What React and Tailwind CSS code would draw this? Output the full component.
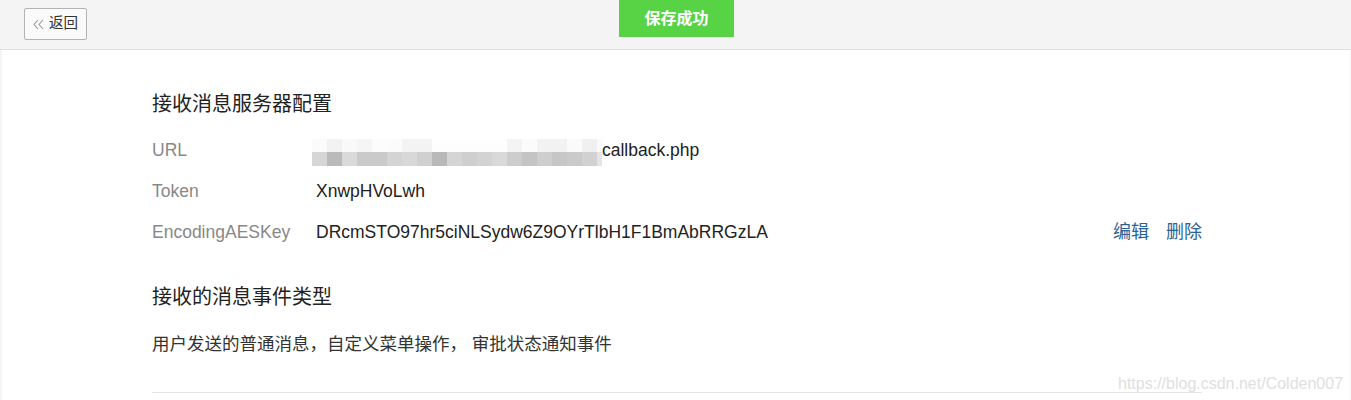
import React from "react";

const font = { fontFamily: '"Liberation Sans", "Noto Sans CJK SC", sans-serif' };

// mosaic that hides the host part of the callback URL
const topRow = [
  "#fbfbfb", "#f2f2f2", "#f9f9f9", "#f5f5f5", "#fcfcfc", "#fbfbfb", "#f3f3f3",
  "#f3f3f3", "#fdfdfd", "#fdfdfd", "#fdfdfd", "#fdfdfd", "#fdfdfd", "#f4f4f4",
  "#fbfbfb", "#f2f2f2", "#f2f2f2", "#fafafa", "#f0f0f0", "#fafafa",
];
const bottomRow = [
  "#d6d6d6", "#bababa", "#dadada", "#cacaca", "#cacaca", "#d4d4d4", "#d8d8d8",
  "#d0d0d0", "#b9b9b9", "#d5d5d5", "#cfcfcf", "#d3d3d3", "#d9d9d9", "#cdcdcd",
  "#c4c4c4", "#cecece", "#c6c6c6", "#cacaca", "#d1d1d1", "#e4e4e4",
];

const Mosaic = () => (
  <div className="flex flex-col w-[290px] overflow-hidden">
    <div className="flex h-[13px]">
      {topRow.map((c, i) => (
        <div key={i} className="shrink-0 w-[15px] h-full" style={{ backgroundColor: c }} />
      ))}
    </div>
    <div className="flex h-[14px]">
      {bottomRow.map((c, i) => (
        <div key={i} className="shrink-0 w-[15px] h-full" style={{ backgroundColor: c }} />
      ))}
    </div>
  </div>
);

const Row = ({ label, children, actions }) => (
  <div className="flex items-center h-[41px] text-[17.5px]">
    <div className="w-[164px] text-[#888]">{label}</div>
    <div className="flex-1 flex items-center text-[#222]">{children}</div>
    {actions && (
      <div className="flex gap-[17px] text-[#2a6496] text-[18px]">
        <span>编辑</span>
        <span>删除</span>
      </div>
    )}
  </div>
);

export default function App() {
  return (
    <div className="relative w-[1351px] h-[400px] overflow-hidden bg-[#f4f4f4]" style={font}>
      {/* Top bar */}
      <div className="h-[50px] border-b border-[#e0e0e0] pl-[24px] pt-[8px]">
        <button className="flex items-center h-[32px] w-[63px] pl-[8px] gap-[5px] border border-[#b3b3b3] rounded-[2px] bg-[#fafafa] text-[#333] text-[14.5px]">
          <svg width="11" height="11" viewBox="0 0 11 11" fill="none" stroke="#9a9a9a" strokeWidth="1.1">
            <path d="M5 1 L1 5.5 L5 10" />
            <path d="M10 1 L6 5.5 L10 10" />
          </svg>
          <span>返回</span>
        </button>
      </div>

      {/* Toast */}
      <div className="absolute top-0 left-[619px] w-[115px] h-[37px] bg-[#57d345] flex items-center justify-center text-white text-[16px] font-bold">
        保存成功
      </div>

      {/* Panel */}
      <div className="ml-[2px] mr-[1px] h-[350px] bg-white pl-[150px]">
        <div className="w-[1050px]">
          <div className="pt-[40px] h-[68px] text-[20px] leading-[28px] text-[#222]">
            接收消息服务器配置
          </div>
          <div className="mt-[12px]">
            <Row label="URL">
              <div className="-ml-[4px] mt-[4px]">
                <Mosaic />
              </div>
              <span>callback.php</span>
            </Row>
            <Row label="Token">XnwpHVoLwh</Row>
            <Row label="EncodingAESKey" actions>
              DRcmSTO97hr5ciNLSydw6Z9OYrTlbH1F1BmAbRRGzLA
            </Row>
          </div>
          <div className="mt-[30px] text-[20px] leading-[28px] text-[#222]">
            接收的消息事件类型
          </div>
          <div className="mt-[19px] text-[17.5px] leading-[28px] text-[#333]">
            用户发送的普通消息，自定义菜单操作， 审批状态通知事件
          </div>
          <div className="mt-[34px] border-t border-[#e4e4e4]" />
        </div>
      </div>

      {/* Watermark */}
      <div className="absolute left-[1118px] top-[372px] text-[16px] text-[#e0e0e0]">
        https://blog.csdn.net/Colden007
      </div>
    </div>
  );
}
